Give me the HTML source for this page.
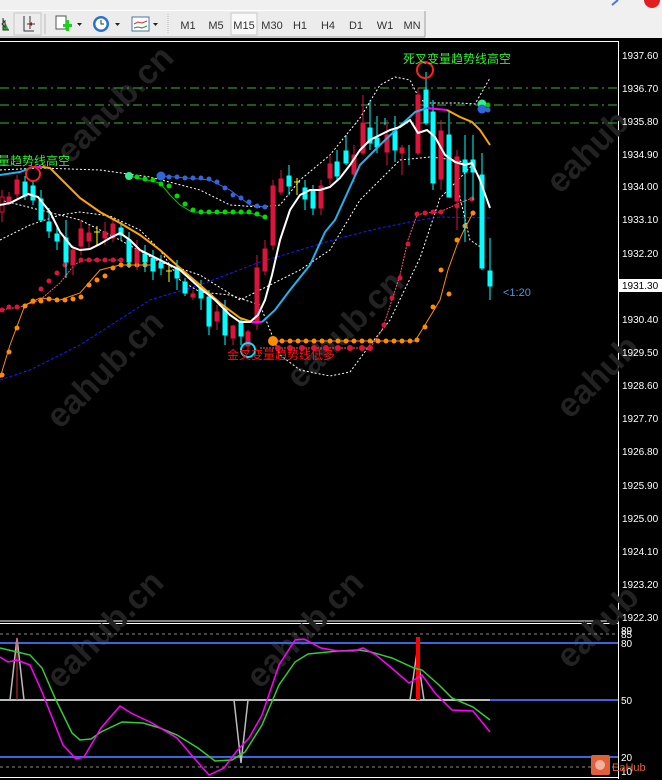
<!DOCTYPE html>
<html><head><meta charset="utf-8"><style>
body{margin:0;width:662px;height:780px;overflow:hidden;background:#000;font-family:"Liberation Sans","Noto Sans CJK SC",sans-serif}
.tb{position:absolute;left:0;top:0;width:662px;height:38px;background:#f0f0f0}
svg{position:absolute;left:0;top:0}
</style></head><body>
<div class="tb"></div>
<svg width="662" height="780" viewBox="0 0 662 780" font-family="Liberation Sans, Noto Sans CJK SC, sans-serif">
<!-- toolbar -->
<rect x="0" y="11" width="425" height="26" fill="#ececec"/>
<line x1="0" y1="10.5" x2="425" y2="10.5" stroke="#fff"/>
<line x1="0" y1="37" x2="425" y2="37" stroke="#a0a0a0"/>
<line x1="425" y1="11" x2="425" y2="37" stroke="#a0a0a0"/>
<rect x="14" y="13" width="27" height="22" fill="none" stroke="#c8c8c8"/>
<path d="M3 18 L3 30 L9 30 M2 24 l3-3 0 6z" stroke="#333" fill="#2a2" />
<path d="M24 16 V31 H34 M30 16 V29 M27 24 h8" stroke="#333" fill="none"/><path d="M32 22 l-3 2 3 2z" fill="#c00"/>
<line x1="45" y1="14" x2="45" y2="34" stroke="#bbb"/>
<rect x="56" y="16" width="10" height="13" fill="#fff" stroke="#555"/>
<path d="M63 24 h3 v-4 h3 v4 h3 v3 h-3 v4 h-3 v-4 h-3z" fill="#2c2"/>
<path d="M77 23 h5 l-2.5 3z" fill="#222"/>
<circle cx="101" cy="24" r="8" fill="#2a72d0"/><circle cx="101" cy="24" r="5.5" fill="#fff"/><path d="M101 20 V24 H104" stroke="#333" fill="none"/>
<path d="M115 23 h5 l-2.5 3z" fill="#222"/>
<rect x="132" y="17" width="17" height="14" fill="#fff" stroke="#4477aa"/><path d="M134 24 l4-2 4 1 5-2 M134 28 l4-1 4 1 5-2" stroke="#c33" fill="none"/><path d="M134 28 l4-1 4 1 5-2" stroke="#3a3" fill="none"/>
<path d="M122+0 0" />
<path d="M122 23 h0" />
<path d="M153 23 h5 l-2.5 3z" fill="#222"/>
<line x1="168" y1="14" x2="168" y2="34" stroke="#bbb" stroke-dasharray="1 1"/>
<rect x="231" y="13" width="26" height="22" fill="#f8f8f8" stroke="#c8c8c8"/>
<g font-size="11" fill="#333" text-anchor="middle">
<text x="188" y="29">M1</text><text x="216" y="29">M5</text><text x="244" y="29">M15</text><text x="272" y="29">M30</text><text x="300" y="29">H1</text><text x="328" y="29">H4</text><text x="356" y="29">D1</text><text x="385" y="29">W1</text><text x="412" y="29">MN</text>
</g>
<path d="M612 5 l6-5" stroke="#4a7ad0" stroke-width="2"/>
<circle cx="652" cy="0" r="8" fill="#e02020"/>
<!-- chart frame -->
<rect x="0" y="38" width="662" height="742" fill="#000"/>
<path d="M0 41.5 H618.5 V779" stroke="#fff" fill="none"/>
<line x1="0" y1="621" x2="618" y2="621" stroke="#fff"/>
<line x1="0" y1="623.5" x2="618" y2="623.5" stroke="#fff"/>
<line x1="0" y1="777.5" x2="618" y2="777.5" stroke="#fff"/>
<!-- watermarks -->
<g fill="#222" font-size="34" font-weight="bold">
<text transform="translate(70,165) rotate(-45)">eahub.cn</text>
<text transform="translate(560,195) rotate(-45)">eahub</text>
<text transform="translate(60,430) rotate(-45)">eahub.cn</text>
<text transform="translate(300,390) rotate(-45)">eahub.cn</text>
<text transform="translate(570,420) rotate(-45)">eahub</text>
<text transform="translate(60,690) rotate(-45)">eahub.cn</text>
<text transform="translate(260,690) rotate(-45)">eahub.cn</text>
<text transform="translate(570,670) rotate(-45)">eahub</text>
</g>
<!-- green dashed levels -->
<g stroke="#3cb33c" stroke-dasharray="9 4 2 4">
<line x1="0" y1="88" x2="618" y2="88"/><line x1="0" y1="105" x2="618" y2="105"/><line x1="0" y1="123" x2="618" y2="123"/>
</g>
<!-- bands -->
<g fill="none" stroke="#fff" stroke-dasharray="2 2">
<polyline points="0,170 40,168 100,170 150,177 200,190 230,205 260,207 280,205 300,180 330,155 360,118 380,85 395,77 410,80 420,100 430,103 460,103 475,104 490,78"/>
<polyline points="0,240 30,225 60,215 80,212 110,216 140,230 160,250 180,280 200,292 230,295 260,305 280,355 300,370 330,376 350,372 370,345 390,320 420,258 440,198 460,178 475,162"/>
<polyline points="0,200 40,210 80,220 120,240 160,262 200,275 240,300 280,280 300,270 330,250 360,200 400,160 430,157 455,160 475,165"/>
<polyline points="455,176 470,240 485,250"/>
</g>
<polyline fill="none" stroke="#1a1aff" stroke-dasharray="3 2" points="0,380 30,370 80,345 150,300 200,285 260,262 300,250 340,238 380,228 420,220 440,217 490,218"/>
<!-- beaded -->
<polyline fill="none" stroke="#ff5577" stroke-dasharray="2 1" points="0,310 20,307 40,300 60,283 75,264 85,260 120,260"/>
<polyline fill="none" stroke="#ff5577" stroke-dasharray="2 1" points="260,348 370,348 382,330 392,300 400,275 408,240 417,215 425,213 440,212 455,205 472,198"/>
<g fill="#dc143c">
<circle cx="2" cy="310" r="2.5"/><circle cx="9" cy="307" r="2.5"/><circle cx="17" cy="307" r="2.5"/><circle cx="25" cy="306" r="2.5"/><circle cx="33" cy="302" r="2.5"/><circle cx="41" cy="289" r="2.5"/><circle cx="49" cy="281" r="2.5"/><circle cx="57" cy="273" r="2.5"/><circle cx="65" cy="265" r="2.5"/><circle cx="73" cy="263" r="2.5"/><circle cx="81" cy="260" r="2.5"/><circle cx="89" cy="260" r="2.5"/><circle cx="97" cy="260" r="2.5"/><circle cx="105" cy="260" r="2.5"/><circle cx="113" cy="260" r="2.5"/><circle cx="121" cy="260" r="2.5"/>
<circle cx="278" cy="348" r="3"/><circle cx="290" cy="348" r="3"/><circle cx="302" cy="348" r="3"/><circle cx="314" cy="348" r="3"/><circle cx="326" cy="348" r="3"/><circle cx="338" cy="348" r="3"/><circle cx="350" cy="348" r="3"/><circle cx="362" cy="348" r="3"/><circle cx="370" cy="348" r="3"/>
<circle cx="384" cy="325" r="2.5"/><circle cx="392" cy="298" r="2.5"/><circle cx="400" cy="278" r="2.5"/><circle cx="408" cy="244" r="2.5"/><circle cx="417" cy="214" r="2.5"/><circle cx="425" cy="213" r="2.5"/><circle cx="433" cy="212" r="2.5"/><circle cx="441" cy="212" r="2.5"/><circle cx="457" cy="206" r="2.5"/><circle cx="472" cy="199" r="2.5"/>
</g>
<polyline fill="none" stroke="#ff8c00" points="0,378 10,345 25,305 40,298 60,300 80,293 100,270 120,265 152,265"/>
<polyline fill="none" stroke="#ff8c00" points="270,341 415,341 425,325 440,300 448,270 457,245 465,228 473,213"/>
<g fill="#ff8c00">
<circle cx="2" cy="375" r="2.5"/><circle cx="9" cy="352" r="2.5"/><circle cx="17" cy="328" r="2.5"/><circle cx="25" cy="306" r="2.5"/><circle cx="33" cy="301" r="2.5"/><circle cx="41" cy="301" r="2.5"/><circle cx="49" cy="299" r="2.5"/><circle cx="57" cy="300" r="2.5"/><circle cx="65" cy="300" r="2.5"/><circle cx="73" cy="299" r="2.5"/><circle cx="81" cy="297" r="2.5"/><circle cx="89" cy="285" r="2.5"/><circle cx="97" cy="280" r="2.5"/><circle cx="105" cy="276" r="2.5"/><circle cx="113" cy="268" r="2.5"/><circle cx="121" cy="265" r="2.5"/><circle cx="129" cy="265" r="2.5"/><circle cx="137" cy="265" r="2.5"/><circle cx="145" cy="265" r="2.5"/><circle cx="153" cy="265" r="2.5"/>
<circle cx="273" cy="341" r="5"/>
<circle cx="282" cy="341" r="2.5"/><circle cx="290" cy="341" r="2.5"/><circle cx="298" cy="341" r="2.5"/><circle cx="306" cy="341" r="2.5"/><circle cx="314" cy="341" r="2.5"/><circle cx="322" cy="341" r="2.5"/><circle cx="330" cy="341" r="2.5"/><circle cx="338" cy="341" r="2.5"/><circle cx="346" cy="341" r="2.5"/><circle cx="354" cy="341" r="2.5"/><circle cx="362" cy="341" r="2.5"/><circle cx="370" cy="341" r="2.5"/><circle cx="378" cy="341" r="2.5"/><circle cx="386" cy="341" r="2.5"/><circle cx="394" cy="341" r="2.5"/><circle cx="402" cy="341" r="2.5"/><circle cx="410" cy="341" r="2.5"/><circle cx="417" cy="340" r="2.5"/>
<circle cx="425" cy="327" r="2.5"/><circle cx="433" cy="307" r="2.5"/><circle cx="441" cy="270" r="2.5"/><circle cx="449" cy="294" r="2.5"/><circle cx="457" cy="240" r="2.5"/><circle cx="465" cy="226" r="2.5"/><circle cx="473" cy="213" r="2.5"/>
</g>
<!-- green/blue dots -->
<polyline fill="none" stroke="#0c0" points="129,176 160,183 170,195 180,205 192,212 250,213 265,217"/>
<polyline fill="none" stroke="#3366dd" points="161,176 175,177 210,180 230,190 250,205 265,207"/>
<g fill="#00dd00"><circle cx="129" cy="176" r="4" fill="#33ee88"/><circle cx="137" cy="177" r="2.5"/><circle cx="145" cy="179" r="2.5"/><circle cx="153" cy="180" r="2.5"/><circle cx="161" cy="184" r="2.5"/><circle cx="169" cy="186" r="2.5"/><circle cx="177" cy="196" r="2.5"/><circle cx="185" cy="204" r="2.5"/><circle cx="193" cy="210" r="2.5"/><circle cx="201" cy="212" r="2.5"/><circle cx="209" cy="212" r="2.5"/><circle cx="217" cy="212" r="2.5"/><circle cx="225" cy="212" r="2.5"/><circle cx="233" cy="212" r="2.5"/><circle cx="241" cy="212" r="2.5"/><circle cx="249" cy="212" r="2.5"/><circle cx="257" cy="214" r="2.5"/><circle cx="265" cy="217" r="2.5"/></g>
<g fill="#3366dd"><circle cx="161" cy="176" r="4.5"/><circle cx="169" cy="177" r="2.5"/><circle cx="177" cy="177" r="2.5"/><circle cx="185" cy="178" r="2.5"/><circle cx="193" cy="178" r="2.5"/><circle cx="201" cy="178" r="2.5"/><circle cx="209" cy="179" r="2.5"/><circle cx="217" cy="182" r="2.5"/><circle cx="225" cy="188" r="2.5"/><circle cx="233" cy="195" r="2.5"/><circle cx="241" cy="198" r="2.5"/><circle cx="249" cy="202" r="2.5"/><circle cx="257" cy="206" r="2.5"/><circle cx="265" cy="207" r="2.5"/></g>
<circle cx="482" cy="104" r="4.5" fill="#33ee88"/><circle cx="488" cy="105" r="2.5" fill="#0c0"/><circle cx="482" cy="109" r="4.5" fill="#3366dd"/><circle cx="488" cy="110" r="2.5" fill="#3366dd"/>
<!-- candles -->
<g stroke-width="1">
<g stroke="#dc143c" fill="#dc143c">
<line x1="2" y1="190" x2="2" y2="222"/><rect x="0" y="197" width="4" height="15" fill="#000"/>
<line x1="9" y1="192" x2="9" y2="205"/><rect x="7" y="197" width="4" height="5"/>
<line x1="17" y1="175" x2="17" y2="200"/><rect x="15" y="180" width="4" height="14"/>
<line x1="73" y1="245" x2="73" y2="275"/><rect x="71" y="250" width="4" height="15"/>
<line x1="81" y1="220" x2="81" y2="255"/><rect x="79" y="229" width="4" height="17"/>
<line x1="89" y1="225" x2="89" y2="250"/><rect x="87" y="233" width="4" height="8"/>
<line x1="105" y1="222" x2="105" y2="245"/><rect x="103" y="232" width="4" height="6"/>
<line x1="113" y1="218" x2="113" y2="242"/><rect x="111" y="224" width="4" height="14"/>
<line x1="137" y1="240" x2="137" y2="270"/><rect x="135" y="249" width="4" height="14"/>
<line x1="193" y1="290" x2="193" y2="300"/><rect x="191" y="294" width="4" height="3"/>
<line x1="217" y1="305" x2="217" y2="330"/><rect x="215" y="312" width="4" height="9"/>
<line x1="233" y1="325" x2="233" y2="345"/><rect x="231" y="326" width="4" height="12"/>
<line x1="248" y1="330" x2="248" y2="352"/><rect x="246" y="332" width="4" height="14"/>
<line x1="257" y1="255" x2="257" y2="330"/><rect x="255" y="268" width="4" height="55"/>
<line x1="265" y1="240" x2="265" y2="275"/><rect x="263" y="249" width="4" height="22"/>
<line x1="273" y1="180" x2="273" y2="250"/><rect x="271" y="186" width="4" height="59"/>
<line x1="281" y1="170" x2="281" y2="195"/><rect x="279" y="179" width="4" height="13"/>
<line x1="321" y1="180" x2="321" y2="215"/><rect x="319" y="186" width="4" height="22"/>
<line x1="330" y1="155" x2="330" y2="185"/><rect x="328" y="164" width="4" height="14"/>
<line x1="354" y1="145" x2="354" y2="182"/><rect x="352" y="155" width="4" height="19"/>
<line x1="363" y1="95" x2="363" y2="155"/><rect x="361" y="123" width="4" height="30"/>
<line x1="387" y1="120" x2="387" y2="165"/><rect x="385" y="135" width="4" height="17"/>
<line x1="402" y1="145" x2="402" y2="175"/><rect x="400" y="148" width="4" height="5"/>
<line x1="418" y1="88" x2="418" y2="155"/><rect x="416" y="95" width="4" height="58"/>
<line x1="441" y1="120" x2="441" y2="190"/><rect x="439" y="131" width="4" height="48"/>
<line x1="457" y1="150" x2="457" y2="230"/><rect x="455" y="157" width="4" height="44"/>
</g>
<g stroke="#00ffff" fill="#00ffff">
<line x1="25" y1="176" x2="25" y2="200"/><rect x="23" y="182" width="4" height="14"/>
<line x1="33" y1="180" x2="33" y2="205"/><rect x="31" y="186" width="4" height="14"/>
<line x1="41" y1="190" x2="41" y2="222"/><rect x="39" y="199" width="4" height="21"/>
<line x1="49" y1="208" x2="49" y2="238"/><rect x="47" y="222" width="4" height="9"/>
<line x1="57" y1="225" x2="57" y2="250"/><rect x="55" y="234" width="4" height="7"/>
<line x1="66" y1="220" x2="66" y2="278"/><rect x="64" y="238" width="4" height="24"/>
<line x1="121" y1="222" x2="121" y2="240"/><rect x="119" y="228" width="4" height="7"/>
<line x1="129" y1="232" x2="129" y2="268"/><rect x="127" y="240" width="4" height="22"/>
<line x1="145" y1="245" x2="145" y2="272"/><rect x="143" y="254" width="4" height="8"/>
<line x1="153" y1="250" x2="153" y2="280"/><rect x="151" y="258" width="4" height="13"/>
<line x1="161" y1="255" x2="161" y2="275"/><rect x="159" y="263" width="4" height="5"/>
<line x1="177" y1="260" x2="177" y2="290"/><rect x="175" y="267" width="4" height="11"/>
<line x1="185" y1="278" x2="185" y2="296"/><rect x="183" y="282" width="4" height="11"/>
<line x1="201" y1="280" x2="201" y2="310"/><rect x="199" y="289" width="4" height="9"/>
<line x1="209" y1="290" x2="209" y2="335"/><rect x="207" y="297" width="4" height="29"/>
<line x1="225" y1="300" x2="225" y2="345"/><rect x="223" y="309" width="4" height="26"/>
<line x1="241" y1="318" x2="241" y2="345"/><rect x="239" y="321" width="4" height="15"/>
<line x1="289" y1="165" x2="289" y2="195"/><rect x="287" y="176" width="4" height="10"/>
<line x1="305" y1="180" x2="305" y2="210"/><rect x="303" y="188" width="4" height="11"/>
<line x1="313" y1="185" x2="313" y2="215"/><rect x="311" y="191" width="4" height="17"/>
<line x1="337" y1="150" x2="337" y2="180"/><rect x="335" y="162" width="4" height="14"/>
<line x1="346" y1="135" x2="346" y2="165"/><rect x="344" y="151" width="4" height="12"/>
<line x1="370" y1="100" x2="370" y2="150"/><rect x="368" y="128" width="4" height="15"/>
<line x1="377" y1="116" x2="377" y2="153"/><rect x="375" y="138" width="4" height="9"/>
<line x1="385" y1="118" x2="385" y2="125"/>
<line x1="395" y1="116" x2="395" y2="162"/><rect x="393" y="131" width="4" height="19"/>
<line x1="409" y1="145" x2="409" y2="165"/>
<line x1="426" y1="72" x2="426" y2="125"/><rect x="424" y="90" width="4" height="33"/>
<line x1="433" y1="100" x2="433" y2="190"/><rect x="431" y="112" width="4" height="71"/>
<line x1="449" y1="110" x2="449" y2="197"/><rect x="447" y="135" width="4" height="62"/>
<line x1="465" y1="135" x2="465" y2="242"/><rect x="463" y="160" width="4" height="12"/>
<line x1="473" y1="135" x2="473" y2="200"/><rect x="471" y="160" width="4" height="12"/>
<line x1="482" y1="153" x2="482" y2="270"/><rect x="480" y="175" width="4" height="93"/>
<line x1="490" y1="238" x2="490" y2="300"/><rect x="488" y="271" width="4" height="15"/>
</g>
<g stroke="#ffff00"><line x1="97" y1="226" x2="97" y2="245"/><line x1="94" y1="232" x2="100" y2="232"/><line x1="169" y1="264" x2="169" y2="282"/><line x1="166" y1="271" x2="172" y2="271"/><line x1="297" y1="178" x2="297" y2="195"/><line x1="294" y1="182" x2="300" y2="182"/></g>
</g>
<!-- MAs -->
<polyline fill="none" stroke="#1eb4ef" stroke-width="2" points="0,175 20,172 33,167"/>
<polyline fill="none" stroke="#ff00ff" stroke-width="2" points="33,167 42,167"/>
<polyline fill="none" stroke="#ffa500" stroke-width="2" points="42,167 50,168 60,178 80,198 100,212 120,223 140,235 160,250 180,268 200,285 220,303 240,318 252,322"/>
<polyline fill="none" stroke="#ff00ff" stroke-width="2" points="252,322 262,322"/>
<polyline fill="none" stroke="#1eb4ef" stroke-width="2" points="262,322 275,310 290,290 310,265 325,232 335,220 345,198 360,165 380,145 400,126 415,112 427,108"/>
<polyline fill="none" stroke="#ff00ff" stroke-width="2" points="427,108 447,110"/>
<polyline fill="none" stroke="#ffa500" stroke-width="2" points="447,110 460,117 472,122 480,130 490,145"/>
<polyline fill="none" stroke="#fff" stroke-width="2" points="0,205 10,203 28,194 38,197 50,212 60,232 72,247 80,250 90,249 100,244 110,238 120,233 130,240 140,250 160,260 180,270 200,288 215,300 230,315 240,322 250,322 258,315 265,300 272,275 280,240 290,210 300,195 310,190 320,190 330,187 340,178 350,165 360,150 370,140 380,135 390,130 400,127 410,120 418,133 427,130 435,137 445,155 455,162 465,165 472,163 480,180 490,208"/>
<!-- signal stars -->
<g fill="none" stroke="#ff2020" stroke-width="2"><circle cx="33" cy="174" r="7"/><circle cx="425" cy="70" r="8"/></g>
<g fill="none" stroke="#00e5ff" stroke-width="2"><circle cx="248" cy="350" r="7"/></g>
<!-- labels -->
<text x="403" y="63" font-size="12" fill="#33ee33">死叉变量趋势线高空</text>
<text x="-2" y="165" font-size="12" fill="#33ee33">量趋势线高空</text>
<text x="227" y="359" font-size="12" fill="#ff1010">金叉变量趋势线低多</text>
<text x="503" y="296" font-size="11" fill="#4a9ad8">&lt;1:20</text>
<!-- axis -->
<g font-size="10" fill="#fff">
<text x="622" y="59">1937.60</text><text x="622" y="92">1936.70</text><text x="622" y="125">1935.80</text><text x="622" y="158">1934.90</text><text x="622" y="190">1934.00</text><text x="622" y="223">1933.10</text><text x="622" y="257">1932.20</text>
<text x="622" y="323">1930.40</text><text x="622" y="356">1929.50</text><text x="622" y="389">1928.60</text><text x="622" y="422">1927.70</text><text x="622" y="455">1926.80</text><text x="622" y="489">1925.90</text><text x="622" y="522">1925.00</text><text x="622" y="555">1924.10</text><text x="622" y="588">1923.20</text><text x="622" y="621">1922.30</text>
</g>
<rect x="619" y="279" width="43" height="13" fill="#fff"/>
<text x="622" y="289" font-size="10" fill="#000">1931.30</text>
<!-- stochastic -->
<line x1="0" y1="634" x2="618" y2="634" stroke="#888" stroke-dasharray="3 3"/>
<line x1="0" y1="767" x2="618" y2="767" stroke="#888" stroke-dasharray="3 3"/>
<g stroke="#3c64dc" stroke-width="2"><line x1="0" y1="643" x2="618" y2="643"/><line x1="0" y1="757" x2="618" y2="757"/><line x1="490" y1="700" x2="618" y2="700"/></g>
<line x1="0" y1="700" x2="490" y2="700" stroke="#bbb" stroke-width="2"/>
<g stroke="#bbb" stroke-width="1.5" fill="none"><polyline points="10,700 17,638 24,700"/><polyline points="234,700 241,763 248,700"/><polyline points="410,700 417,652 424,700"/></g>
<line x1="17" y1="638" x2="17" y2="700" stroke="#c33"/>
<rect x="416" y="637" width="4" height="63" fill="#ff0000"/>
<polyline fill="none" stroke="#33cc33" stroke-width="1.5" points="0,648 17,652 30,655 42,668 55,698 72,733 80,740 91,739 101,732 122,722 143,723 160,728 177,735 198,748 215,761 232,760 245,752 262,725 279,685 295,662 308,654 338,651 359,650 371,652 392,658 414,668 422,670 439,685 452,698 473,707 490,720"/>
<polyline fill="none" stroke="#ff00ff" stroke-width="1.5" points="0,657 8,662 17,660 30,665 42,692 63,745 76,759 84,757 101,728 120,706 131,713 152,723 177,738 194,758 209,775 224,768 236,752 249,738 262,715 279,665 295,640 304,639 321,648 338,651 354,651 363,648 376,655 388,665 409,683 422,675 435,693 452,710 473,711 490,732"/>
<g font-size="10" fill="#fff"><text x="621" y="634">89</text><text x="621" y="638">85</text><text x="621" y="647">80</text><text x="621" y="704">50</text><text x="621" y="761">20</text><text x="621" y="775">10</text></g>
<rect x="591" y="755" width="19" height="20" rx="2" fill="#e0603a"/><circle cx="600" cy="765" r="5" fill="#f4b0a0"/>
<text x="612" y="771" font-size="11" fill="#e0603a">EaHub</text>
</svg>
</body></html>
